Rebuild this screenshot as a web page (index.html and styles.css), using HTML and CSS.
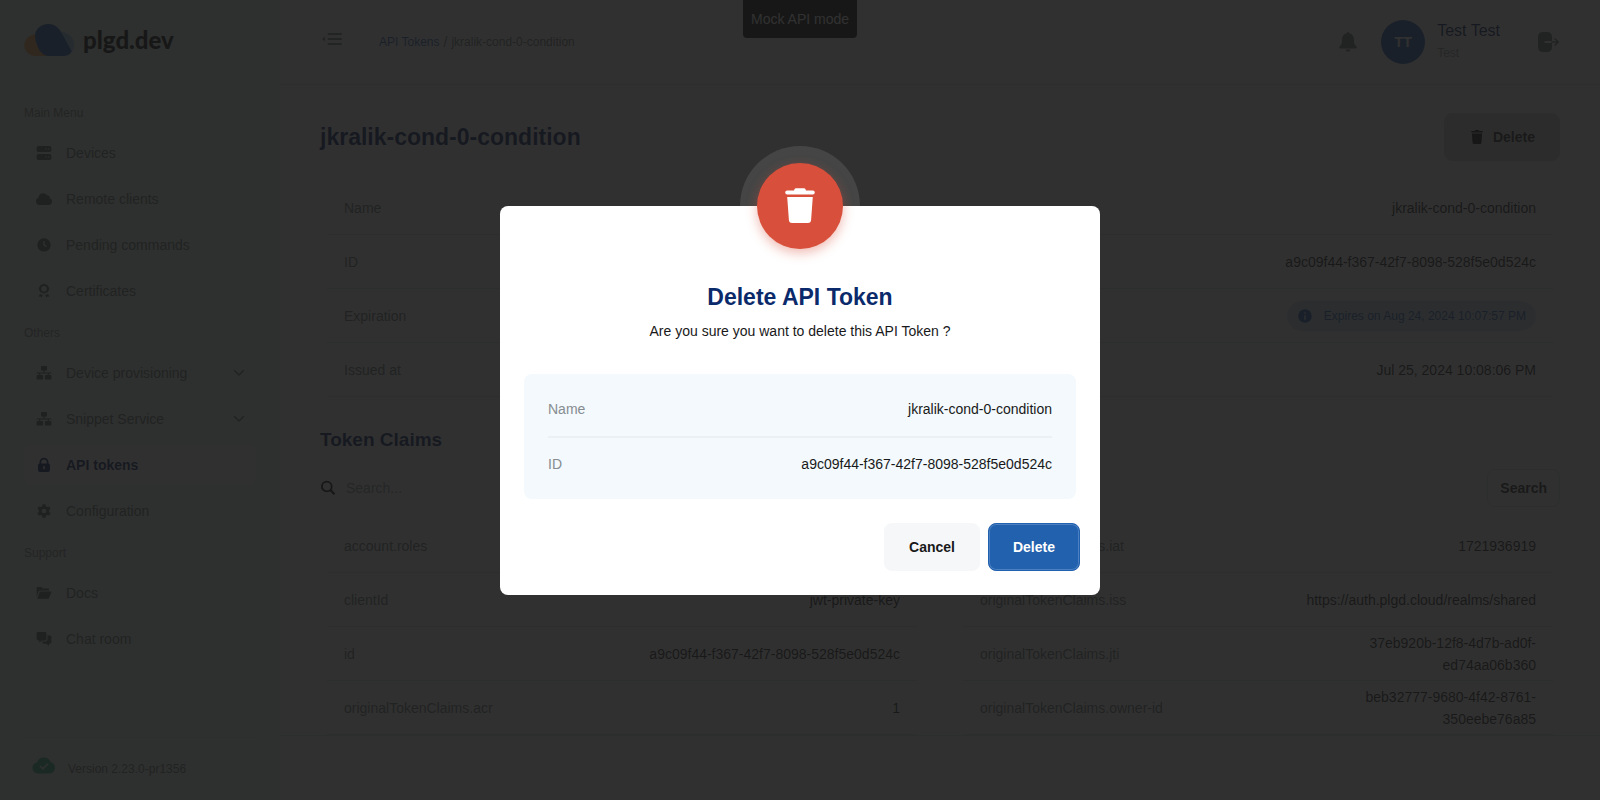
FILE: index.html
```html
<!DOCTYPE html>
<html lang="en">
<head>
<meta charset="utf-8">
<title>API Tokens | plgd.dev</title>
<link rel="stylesheet" href="styles.css">
</head>
<body>
<svg class="sprite" aria-hidden="true">
  <symbol id="i-net" viewBox="0 0 16 16"><path d="M5.600 1h4.800a.6.6 0 0 1 .6.600v3.300a.6.6 0 0 1-.6.600H8.600v2H15.300v1.100H13v1.500h1.800a.6.6 0 0 1 .6.600v3.300a.6.6 0 0 1-.6.600H9.500a.6.6 0 0 1-.6-.6v-3.300a.6.6 0 0 1 .6-.6h2.200V8.600H4.300v1.500h2.200a.6.6 0 0 1 .6.600v3.300a.6.6 0 0 1-.6.600H1.200a.6.6 0 0 1-.6-.6v-3.300a.6.6 0 0 1 .6-.6H3V8.600H.7V7.500h6.700v-2H5.600a.6.6 0 0 1-.6-.6V1.600a.6.6 0 0 1 .6-.6z"/></symbol>
  <symbol id="i-chevron" viewBox="0 0 12 8"><path d="M1.500 1.500 6 6l4.500-4.500" fill="none" stroke="currentColor" stroke-width="1.500" stroke-linecap="round" stroke-linejoin="round"/></symbol>
  <symbol id="i-trash" viewBox="0 0 30 35"><path d="M9 2.500C9.300.9 10.200.3 11.500.3h7c1.300 0 2.200.6 2.500 2.200h6.800a2 2 0 0 1 0 4H2.200a2 2 0 0 1 0-4zM2.200 9h25.600l-1.700 23a3.200 3.200 0 0 1-3.200 3H7.100a3.200 3.200 0 0 1-3.200-3z"/></symbol>
</svg>

<div class="app">
  <aside class="sidebar">
    <a class="logo" href="#">
      <svg width="50" height="32" viewBox="0 0 50 32"><path d="M16 10.500H11A10.700 10.700 0 0 0 11 32H24z" fill="#ffb04a"/><path d="M35 7.500c9 .2 15 6 15 13.500 0 3-1 5-2.500 7z" fill="#8ec5ee"/><path d="M24 0c5.500 0 10 2.500 13 8l10.800 19.500C46 30.500 43 32 39 32H25c-5 0-8.500-3-11-8.500-2-4.500-3-8-3-11.500C11 5 17 0 24 0z" fill="#1c61b5"/></svg>
      <span class="logo-text">plgd.dev</span>
    </a>
    <nav class="nav">
      <h2 class="nav-label">Main Menu</h2>
      <a class="nav-item" href="#"><svg class="nav-icon" viewBox="0 0 16 16"><path fill-rule="evenodd" d="M2.500 1h11A1.900 1.900 0 0 1 15.400 2.900V5a1.900 1.900 0 0 1-1.900 1.900h-11A1.900 1.900 0 0 1 .6 5V2.900A1.900 1.900 0 0 1 2.500 1zm7.100 2.300v1.300h1.200V3.300zm2.700 0v1.300h1.200V3.300zM2.500 9h11a1.900 1.900 0 0 1 1.900 1.900V13a1.900 1.900 0 0 1-1.900 1.900h-11A1.900 1.900 0 0 1 .6 13v-2.100A1.900 1.900 0 0 1 2.500 9zm7.100 2.300v1.300h1.200v-1.300zm2.700 0v1.300h1.200v-1.300z"/></svg>Devices</a>
      <a class="nav-item" href="#"><svg class="nav-icon" viewBox="0 0 16 16"><path d="M3.800 14A3.700 3.700 0 0 1 2.500 6.800C2.600 4.300 4.600 2.200 7.100 2.200c1.700 0 3.100.8 3.900 2.200 1.700-.3 2.900 1 2.700 2.800A3.500 3.500 0 0 1 12.500 14z"/></svg>Remote clients</a>
      <a class="nav-item" href="#"><svg class="nav-icon" viewBox="0 0 16 16"><path fill-rule="evenodd" d="M8 1.200a6.700 6.700 0 1 1 0 13.400A6.700 6.700 0 0 1 8 1.200zM7.300 4v4.300l2.800 2 .8-1.100-2.300-1.600V4z"/></svg>Pending commands</a>
      <a class="nav-item" href="#"><svg class="nav-icon" viewBox="0 0 16 16"><path fill-rule="evenodd" d="M8 .8c1 0 1.500.7 2.300 1 .9.200 1.600.5 1.900 1.400.2.900 1 1.500 1 2.500s-.8 1.600-1 2.500c-.3.900-1 1.200-1.900 1.400-.8.300-1.300 1-2.300 1s-1.500-.7-2.300-1c-.9-.2-1.600-.5-1.900-1.400-.2-.9-1-1.500-1-2.500s.8-1.600 1-2.500c.3-.9 1-1.200 1.900-1.400C6.500 1.500 7 .8 8 .8zm0 2.100a2.800 2.800 0 1 0 0 5.600 2.800 2.800 0 0 0 0-5.600zM4.100 11l2.700 1-1.100 2.600-1.200-1.100-1.800.1zm7.800 0L9.200 12l1.100 2.600 1.200-1.100 1.800.1z"/></svg>Certificates</a>
      <h2 class="nav-label">Others</h2>
      <a class="nav-item" href="#"><svg class="nav-icon"><use href="#i-net"/></svg>Device provisioning<svg class="nav-chevron"><use href="#i-chevron"/></svg></a>
      <a class="nav-item" href="#"><svg class="nav-icon"><use href="#i-net"/></svg>Snippet Service<svg class="nav-chevron"><use href="#i-chevron"/></svg></a>
      <a class="nav-item nav-item-active" href="#"><svg class="nav-icon" viewBox="0 0 16 16"><path fill-rule="evenodd" d="M3.500 6.500V5.200a4.500 4.500 0 0 1 9 0v1.300A1.600 1.600 0 0 1 14 8.100V13a2 2 0 0 1-2 2H4a2 2 0 0 1-2-2V8.100a1.600 1.600 0 0 1 1.500-1.600zm1.800 0h5.400V5.200a2.700 2.700 0 0 0-5.400 0zM7.300 9v3.200h1.400V9z"/></svg>API tokens</a>
      <a class="nav-item" href="#"><svg class="nav-icon" viewBox="0 0 16 16"><path fill-rule="evenodd" d="M6.600 1.300h2.800l.5 1.900 1.300.8 1.900-.6 1.400 2.400-1.400 1.400v1.600l1.400 1.400-1.400 2.400-1.900-.6-1.300.8-.5 1.900H6.600l-.5-1.900-1.300-.8-1.900.6-1.400-2.400 1.400-1.400V7.200L1.500 5.800l1.400-2.400 1.900.6 1.300-.8zM8 5.700a2.300 2.300 0 1 0 0 4.600 2.300 2.300 0 0 0 0-4.600z"/></svg>Configuration</a>
      <h2 class="nav-label">Support</h2>
      <a class="nav-item" href="#"><svg class="nav-icon" viewBox="0 0 16 16"><path d="M.7 12V3.200C.7 2.500 1.200 2 1.900 2h3.400l1.500 1.400h5c.7 0 1.200.5 1.200 1.200v1H4.200c-.8 0-1.300.4-1.600 1zM1.200 13.800l2.300-6.400c.2-.6.6-.9 1.200-.9h10c.6 0 .8.400.6.900l-2.300 5.500c-.2.600-.6.900-1.200.9z"/></svg>Docs</a>
      <a class="nav-item" href="#"><svg class="nav-icon" viewBox="0 0 16 16"><path d="M2.200 1h6.600c.9 0 1.600.7 1.600 1.600v5.200c0 .9-.7 1.600-1.600 1.600H6L3.400 11.700V9.400H2.200C1.300 9.400.6 8.700.6 7.800V2.600C.6 1.700 1.300 1 2.200 1zM11.500 4.500h2.300c.9 0 1.600.7 1.600 1.600v5c0 .9-.7 1.600-1.600 1.600h-.9v2.400l-2.600-2.400H7.800c-.9 0-1.600-.7-1.600-1.600v-.6h2.900c1.400 0 2.400-1 2.400-2.400z"/></svg>Chat room</a>
    </nav>
    <div class="version">
      <svg width="24" height="17" viewBox="0 0 24 17"><path fill="#2fb58e" fill-rule="evenodd" d="M6 16.500a5.600 5.600 0 0 1-1-11.100A7.300 7.300 0 0 1 18.600 5 5.900 5.900 0 0 1 18 16.500zM8.600 8.500l-1.100 1.100 3.400 3.400 5.700-5.700-1.100-1.100-4.600 4.600z"/></svg>
      Version 2.23.0-pr1356
    </div>
  </aside>

  <div class="page">
    <header class="topbar">
      <button class="icon-button menu-button" aria-label="Collapse menu"><svg width="20" height="14" viewBox="0 0 20 14"><path d="M6.500 2h12.500M6.500 7h12.500M6.500 12h12.500" stroke="#738080" stroke-width="2" stroke-linecap="round"/><path d="M0 7l3-2.500v5z" fill="#738080"/></svg></button>
      <nav class="crumbs"><a class="crumb-link" href="#">API Tokens</a><span class="crumb-slash">/</span><span>jkralik-cond-0-condition</span></nav>
      <button class="icon-button" aria-label="Notifications"><svg width="18" height="20" viewBox="0 0 18 20"><path d="M9 0c.8 0 1.200.6 1.200 1.300C13.600 2 15 4.500 15 8c0 4 1.200 5.300 2.600 6.700.6.700.3 1.700-.7 1.700H1.100c-1 0-1.300-1-.7-1.700C1.800 13.300 3 12 3 8c0-3.500 1.400-6 4.800-6.700C7.800.6 8.200 0 9 0zM6.500 17.600h5C11.200 19 10.200 19.800 9 19.800S6.800 19 6.500 17.600z" fill="#6a7874"/></svg></button>
      <div class="user">
        <span class="avatar">TT</span>
        <div>
          <div class="user-name">Test Test</div>
          <div class="user-role">Test</div>
        </div>
      </div>
      <button class="icon-button" aria-label="Log out"><svg width="21" height="20" viewBox="0 0 21 20"><path fill="#6a7874" d="M4.500 0h5A4.500 4.500 0 0 1 14 4.500V9H7.500a.9.9 0 0 0 0 2H14v4.500A4.500 4.500 0 0 1 9.500 20h-5A4.500 4.500 0 0 1 0 15.500v-11A4.500 4.500 0 0 1 4.500 0z"/><path d="M14 10h6M17.200 7l3 3-3 3" fill="none" stroke="#6a7874" stroke-width="1.700" stroke-linecap="round" stroke-linejoin="round"/></svg></button>
    </header>

    <main class="content">
      <div class="title-row">
        <h1 class="title">jkralik-cond-0-condition</h1>
        <button class="button"><svg class="button-icon"><use href="#i-trash"/></svg>Delete</button>
      </div>
      <dl class="list">
        <div class="row"><dt>Name</dt><dd>jkralik-cond-0-condition</dd></div>
        <div class="row"><dt>ID</dt><dd>a9c09f44-f367-42f7-8098-528f5e0d524c</dd></div>
        <div class="row"><dt>Expiration</dt><dd class="pill"><svg width="14" height="14" viewBox="0 0 14 14"><circle cx="7" cy="7" r="6.800" fill="#1f5fb5"/><path d="M6.200 6.200h1.600v4.600H6.200zM6.200 3.200h1.600v1.600H6.200z" fill="#cfe2f2"/></svg>Expires on Aug 24, 2024 10:07:57 PM</dd></div>
        <div class="row"><dt>Issued at</dt><dd>Jul 25, 2024 10:08:06 PM</dd></div>
      </dl>
      <h2 class="subtitle">Token Claims</h2>
      <form class="search">
        <svg width="16" height="16" viewBox="0 0 16 16"><circle cx="6.800" cy="6.500" r="4.900" fill="none" stroke="#000" stroke-width="1.800"/><path d="M10.300 10l4.200 4.300" stroke="#000" stroke-width="2.300"/></svg>
        <input class="search-input" type="text" placeholder="Search..." aria-label="Search">
        <button class="search-button" type="button">Search</button>
      </form>
      <div class="columns">
        <dl class="list">
          <div class="row"><dt>account.roles</dt><dd></dd></div>
          <div class="row"><dt>clientId</dt><dd>jwt-private-key</dd></div>
          <div class="row"><dt>id</dt><dd>a9c09f44-f367-42f7-8098-528f5e0d524c</dd></div>
          <div class="row"><dt>originalTokenClaims.acr</dt><dd>1</dd></div>
        </dl>
        <dl class="list">
          <div class="row"><dt>originalTokenClaims.iat</dt><dd>1721936919</dd></div>
          <div class="row"><dt>originalTokenClaims.iss</dt><dd>https://auth.plgd.cloud/realms/shared</dd></div>
          <div class="row"><dt>originalTokenClaims.jti</dt><dd>37eb920b-12f8-4d7b-ad0f-<br>ed74aa06b360</dd></div>
          <div class="row"><dt>originalTokenClaims.owner-id</dt><dd>beb32777-9680-4f42-8761-<br>350eebe76a85</dd></div>
        </dl>
      </div>
    </main>
    <footer class="footer"></footer>
  </div>
</div>

<div class="mock">Mock API mode</div>

<div class="overlay">
  <div class="halo-wrap">
    <div class="halo"></div>
    <section class="dialog" role="dialog" aria-modal="true" aria-labelledby="dialog-title">
      <div class="badge"><svg width="30" height="35"><use href="#i-trash"/></svg></div>
      <h2 class="dialog-title" id="dialog-title">Delete API Token</h2>
      <p class="dialog-text">Are you sure you want to delete this API Token ?</p>
      <dl class="summary">
        <div class="summary-row"><dt>Name</dt><dd>jkralik-cond-0-condition</dd></div>
        <div class="summary-row"><dt>ID</dt><dd>a9c09f44-f367-42f7-8098-528f5e0d524c</dd></div>
      </dl>
      <div class="actions">
        <button class="button dialog-button">Cancel</button>
        <button class="button dialog-button button-primary">Delete</button>
      </div>
    </section>
  </div>
</div>
</body>
</html>
```
FILE: styles.css
```css
* {
  box-sizing: border-box;
}

body {
  margin: 0;
  font: 14px/22px "Liberation Sans", Arial, sans-serif;
  color: #19191a;
  background: #fff;
}

h1, h2, p, dl, dd {
  margin: 0;
}

a {
  color: inherit;
  text-decoration: none;
}

button {
  font: inherit;
  color: inherit;
  cursor: pointer;
}

svg {
  display: block;
  flex: none;
}

.sprite {
  position: absolute;
  width: 0;
  height: 0;
}

.app {
  display: flex;
  height: 100vh;
  overflow: hidden;
}

/* Sidebar */
.sidebar {
  display: flex;
  flex-direction: column;
  flex: 0 0 280px;
  padding: 24px 24px 0;
  background: #e8f8f0;
  color: #64746f;
}

.logo {
  display: flex;
  align-items: center;
  gap: 9px;
  height: 32px;
}

.logo-text {
  font: 900 24px/32px Lato, sans-serif;
  color: #000;
}

.nav {
  display: flex;
  flex-direction: column;
  gap: 6px;
  padding-top: 35px;
}

.nav-label {
  margin: 7px 0 5px;
  font-size: 12px;
  font-weight: 400;
  line-height: 18px;
  color: #7c8884;
}

.nav-label:first-child {
  margin-top: 13px;
}

.nav-item {
  display: flex;
  align-items: center;
  height: 40px;
  padding: 0 11px 0 12px;
  border-radius: 8px;
}

.nav-icon {
  width: 16px;
  height: 16px;
  margin-right: 14px;
  fill: #50605b;
}

.nav-chevron {
  width: 12px;
  height: 8px;
  margin-left: auto;
}

.nav-item-active {
  background: #fff;
  font-weight: 700;
  color: #001a66;
}

.nav-item-active .nav-icon {
  fill: #001a66;
}

.version {
  display: flex;
  align-items: center;
  gap: 12px;
  height: 63px;
  margin-top: auto;
  padding-left: 8px;
  border-top: 1px solid #d4e2dc;
  font-size: 12px;
}

.version svg {
  margin-bottom: 8px;
}

/* Page */
.page {
  display: flex;
  flex-direction: column;
  flex: 1;
  min-width: 0;
}

.topbar {
  display: flex;
  align-items: center;
  flex: none;
  gap: 24px;
  height: 85px;
  padding: 0 41px 0 42px;
  border-bottom: 1px solid #d4dada;
}

.icon-button {
  padding: 0;
  border: 0;
  background: none;
}

.menu-button {
  padding-bottom: 6px;
}

.crumbs {
  display: flex;
  gap: 4px;
  flex: 1;
  padding-left: 13px;
  font-size: 12px;
  color: #6b7676;
}

.crumb-link {
  color: #1f5fb5;
}

.crumb-slash {
  font-size: 14px;
}

.user {
  display: flex;
  align-items: center;
  gap: 12px;
  padding-right: 14px;
}

.avatar {
  width: 44px;
  height: 44px;
  border-radius: 50%;
  background: #1f5fb5;
  color: #fff;
  font-size: 14px;
  font-weight: 700;
  line-height: 44px;
  text-align: center;
}

.user-name {
  font-size: 16px;
  color: #001a66;
}

.user-role {
  font-size: 12px;
  color: #8a9595;
}

.content {
  flex: 1;
  min-height: 0;
  overflow: hidden;
  padding: 28px 40px 0;
}

.title-row {
  display: flex;
  align-items: center;
  justify-content: space-between;
}

.title {
  font-size: 23px;
  line-height: 32px;
  color: #001a66;
}

.button {
  display: flex;
  align-items: center;
  height: 48px;
  gap: 8px;
  padding: 0 24px;
  border: 1px solid #f6f7f9;
  border-radius: 8px;
  background: #f6f7f9;
  font-weight: 700;
}

.title-row .button {
  border-color: #d8d8d8;
  background: #d8d8d8;
}

.button-icon {
  width: 16px;
  height: 14px;
}

.list {
  padding: 0 7px;
}

.title-row + .list {
  margin-top: 20px;
}

.row {
  display: flex;
  align-items: center;
  justify-content: space-between;
  height: 54px;
  padding: 0 17px;
  border-bottom: 1px solid #d4dada;
}

.row dt {
  color: #687474;
}

.row dd {
  text-align: right;
}

.row .pill {
  display: flex;
  align-items: center;
  gap: 12px;
  height: 30px;
  padding: 0 10px 0 11px;
  border-radius: 15px;
  background: #cfe2f2;
  font-size: 12px;
  color: #1f5fb5;
}

.subtitle {
  margin-top: 27px;
  font-size: 19px;
  line-height: 32px;
  color: #001a66;
}

.search {
  display: flex;
  align-items: center;
  gap: 10px;
  margin-top: 13px;
}

.search-input {
  flex: 1;
  padding: 0;
  border: 0;
  outline: 0;
  background: none;
  font: inherit;
}

.search-input::placeholder {
  color: #8a9595;
}

.search-button {
  height: 38px;
  padding: 0 12px;
  border: 1px solid #d4dada;
  border-radius: 8px;
  background: none;
  font-weight: 700;
}

.columns {
  display: grid;
  grid-template-columns: 1fr 1fr;
  gap: 32px;
  margin-top: 12px;
}

.footer {
  flex: none;
  height: 65px;
  border-top: 1px solid #d4dada;
}

.mock {
  position: fixed;
  top: 0;
  left: 50%;
  transform: translateX(-50%);
  height: 38px;
  padding: 0 8px;
  border-radius: 0 0 4px 4px;
  background: #000;
  color: #fff;
  line-height: 38px;
}

/* Dialog */
.overlay {
  position: fixed;
  inset: 0;
  display: flex;
  align-items: center;
  justify-content: center;
  background: rgba(25, 25, 25, 0.9);
}

.halo-wrap {
  position: relative;
  width: 600px;
}

.halo {
  position: absolute;
  top: -60px;
  left: calc(50% - 60px);
  width: 120px;
  height: 120px;
  border-radius: 50%;
  background: rgba(255, 255, 255, 0.1);
}

.dialog {
  position: relative;
  padding: 75px 24px 24px;
  border-radius: 8px;
  background: #fff;
}

.badge {
  position: absolute;
  top: -43px;
  left: calc(50% - 43px);
  display: grid;
  place-items: center;
  width: 86px;
  height: 86px;
  border-radius: 50%;
  background: #d84f3b;
  box-shadow: 0 4px 12px rgba(216, 79, 59, 0.4);
  fill: #fff;
}

.dialog-title {
  font-size: 23px;
  line-height: 32px;
  text-align: center;
  color: #0b2a6b;
}

.dialog-text {
  margin-top: 7px;
  text-align: center;
}

.summary {
  margin-top: 32px;
  padding: 8px 24px;
  border-radius: 8px;
  background: #f3f9fc;
}

.summary-row {
  display: flex;
  align-items: center;
  justify-content: space-between;
  height: 54px;
}

.summary-row + .summary-row {
  height: 55px;
  border-top: 2px solid #eaf0f4;
}

.summary-row dt {
  color: #868c91;
}

.actions {
  display: flex;
  justify-content: flex-end;
  gap: 8px;
  margin: 24px -4px 0 0;
}

.button-primary {
  border-color: #2261ae;
  background: #2261ae;
  box-shadow: inset 0 0 0 1px #4a80c2;
  color: #fff;
}
```
